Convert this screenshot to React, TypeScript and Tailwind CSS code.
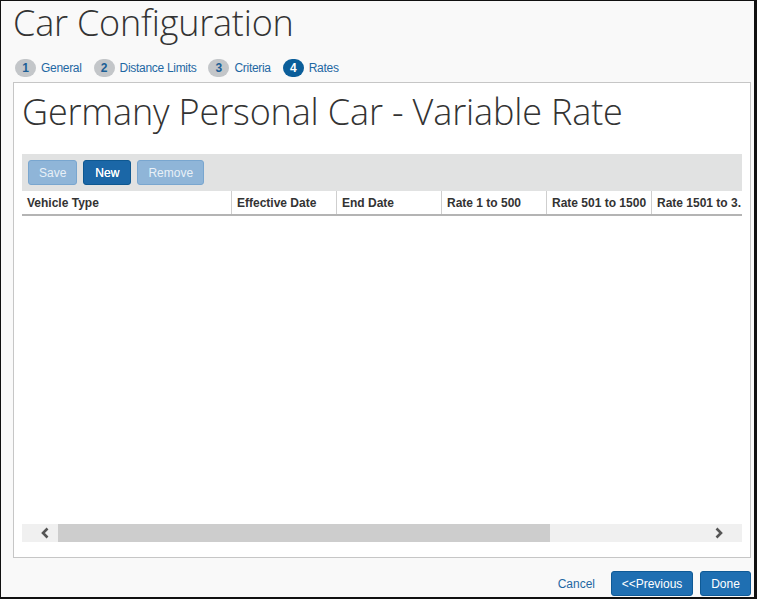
import { FC } from "react";

type Step = { n: number; label: string; active?: boolean };

const steps: Step[] = [
  { n: 1, label: "General" },
  { n: 2, label: "Distance Limits" },
  { n: 3, label: "Criteria" },
  { n: 4, label: "Rates", active: true },
];

const columns = [
  { label: "Vehicle Type", w: "w-[210px]" },
  { label: "Effective Date", w: "w-[105px]" },
  { label: "End Date", w: "w-[105px]" },
  { label: "Rate 1 to 500", w: "w-[105px]" },
  { label: "Rate 501 to 1500", w: "w-[105px]" },
  { label: "Rate 1501 to 3...", w: "w-[89px]" },
];

const StepItem: FC<{ step: Step }> = ({ step }) => (
  <div className="flex items-center gap-[5px] mr-[12px]">
    <div
      className={
        step.active
          ? "w-[21px] h-[18px] rounded-full bg-[#0b5e9a] text-white flex items-center justify-center text-[12px] font-bold"
          : "w-[21px] h-[18px] rounded-full bg-[#c3c6c9] text-[#1b5f96] flex items-center justify-center text-[12px] font-bold"
      }
    >
      {step.n}
    </div>
    <span className="text-[12px] tracking-[-0.3px] text-[#1f68a3]">{step.label}</span>
  </div>
);

const App: FC = () => {
  return (
    <div className="w-[757px] h-[599px] border-l border-t border-r-[3px] border-b-2 border-[#111] bg-[#f9f9f9] flex flex-col font-['Liberation_Sans',Arial,sans-serif] overflow-hidden">
      <h1 className="pl-[12px] h-[46px] leading-[44px] text-[36px] font-light text-[#333] font-['Open_Sans',sans-serif] tracking-[-0.2px] whitespace-nowrap">
        Car Configuration
      </h1>

      <div className="flex items-center pl-[14px] h-[22px] mt-[10px]">
        {steps.map((s) => (
          <StepItem key={s.n} step={s} />
        ))}
      </div>

      <div className="ml-[12px] mt-[3px] w-[738px] h-[476px] border border-[#c6c6c6] bg-white px-[8px] flex flex-col">
        <h2 className="h-[71px] pt-[4px] leading-[50px] text-[36px] font-light text-[#333] font-['Open_Sans',sans-serif] tracking-[-0.15px] whitespace-nowrap">
          Germany Personal Car - Variable Rate
        </h2>

        <div className="h-[37px] bg-[#e1e2e2] flex items-center gap-[6px] px-[6px]">
          <button className="h-[25px] px-[10px] rounded-[3px] bg-[#8fb5d8] border border-[#79a6cf] text-[#e8f0f7] text-[12px]">
            Save
          </button>
          <button className="h-[25px] px-[11px] rounded-[3px] bg-[#1b67a7] border border-[#0e5891] text-white text-[12px] [text-shadow:0_0_0.4px_#fff]">
            New
          </button>
          <button className="h-[25px] px-[10px] rounded-[3px] bg-[#8fb5d8] border border-[#79a6cf] text-[#e8f0f7] text-[12px]">
            Remove
          </button>
        </div>

        <div className="flex h-[25px] border-b-2 border-[#b4b4b4] overflow-hidden">
          {columns.map((c, i) => (
            <div
              key={c.label}
              className={
                (i < columns.length - 1 ? "border-r border-[#cfcfcf] " : "") +
                c.w +
                " shrink-0 flex items-center px-[5px] text-[12px] font-bold text-[#333] whitespace-nowrap overflow-hidden"
              }
            >
              {c.label}
            </div>
          ))}
        </div>

        <div className="flex-1" />

        <div className="h-[18px] bg-[#f0f0f0] flex items-center">
          <div className="w-[36px] flex items-center justify-center pl-[10px]">
            <svg width="10" height="12" viewBox="0 0 10 12">
              <path d="M7.5 1.5 L3 6 L7.5 10.5" fill="none" stroke="#555" strokeWidth="2.6" />
            </svg>
          </div>
          <div className="w-[492px] h-full bg-[#cdcdcd]" />
          <div className="flex-1" />
          <div className="w-[36px] flex items-center justify-center pr-[10px]">
            <svg width="10" height="12" viewBox="0 0 10 12">
              <path d="M2.5 1.5 L7 6 L2.5 10.5" fill="none" stroke="#555" strokeWidth="2.6" />
            </svg>
          </div>
        </div>
        <div className="h-[15px]" />
      </div>

      <div className="flex items-center justify-end gap-[7px] pr-[3px] mt-[13px]">
        <span className="text-[12px] text-[#1f68a3] mr-[9px]">Cancel</span>
        <button className="h-[25px] w-[82px] rounded-[3px] bg-[#1f6fb2] border border-[#0f5a96] text-white text-[12px]">
          &lt;&lt;Previous
        </button>
        <button className="h-[25px] w-[51px] rounded-[3px] bg-[#1f6fb2] border border-[#0f5a96] text-white text-[12px]">
          Done
        </button>
      </div>
    </div>
  );
};

export default App;
